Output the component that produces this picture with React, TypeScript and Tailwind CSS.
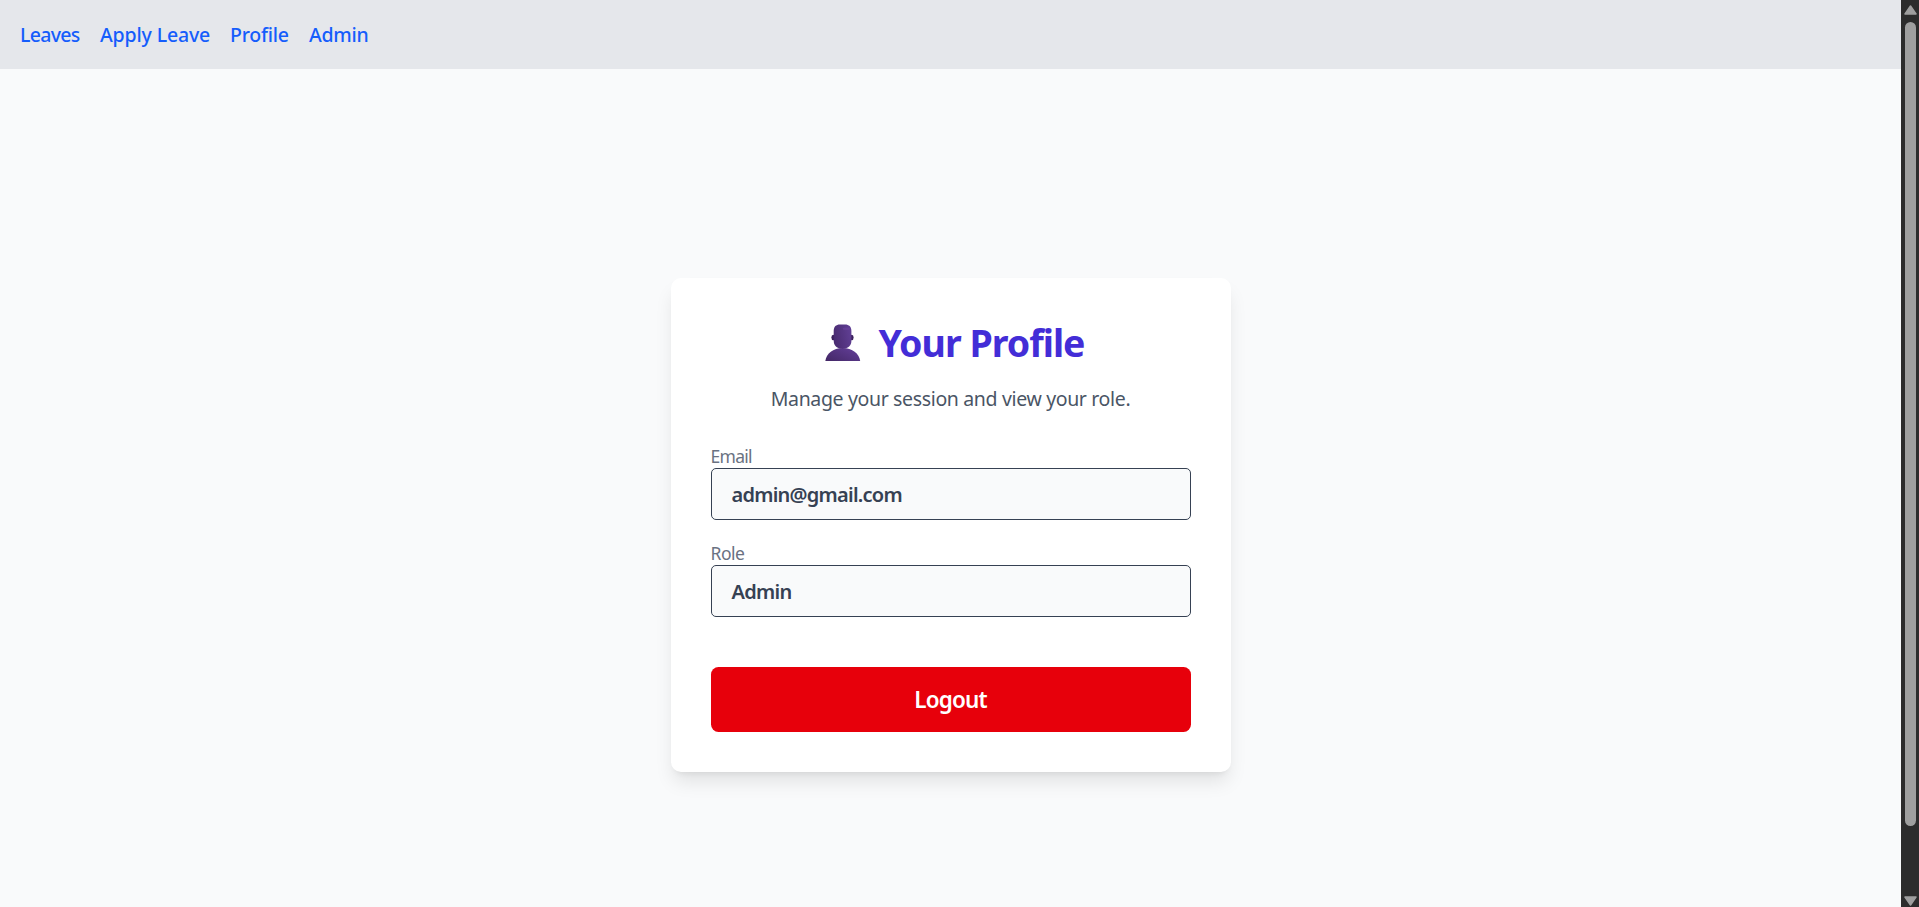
const links = [
  { label: "Leaves", style: "w-[60px] tracking-[-0.7px]" },
  { label: "Apply Leave", style: "w-[110px] tracking-[-0.15px]" },
  { label: "Profile", style: "w-[59px] tracking-[-0.25px]" },
  { label: "Admin", style: "w-[60px] tracking-[-0.3px]" },
];

function PersonIcon() {
  return (
    <svg width="36" height="38" viewBox="0 0 36 38" className="shrink-0" aria-hidden="true">
      <defs>
        <linearGradient id="head" x1="0" y1="0.6" x2="1" y2="0.3">
          <stop offset="0" stopColor="#492b70" />
          <stop offset="1" stopColor="#603f94" />
        </linearGradient>
        <linearGradient id="body" x1="0" y1="1" x2="0.9" y2="0.3">
          <stop offset="0" stopColor="#432765" />
          <stop offset="1" stopColor="#5e3b91" />
        </linearGradient>
      </defs>
      <ellipse cx="8.3" cy="13.5" rx="1.9" ry="2.7" fill="#3b205c" />
      <ellipse cx="26.7" cy="13.5" rx="1.9" ry="2.7" fill="#3b205c" />
      <path d="M.3 37C1.5 29.5 8 24 17.7 24S34 29.5 35.2 37Z" fill="url(#body)" />
      <path d="M8.7 7C8.700 2.500 11 .4 15 .4h5c4 0 6.400 2.100 6.400 6.600v9.500c0 4.500-2.400 8.100-8.900 8.100s-8.800-3.600-8.800-8.100Z" fill="url(#head)" />
      <ellipse cx="21.500" cy="4.700" rx="3.800" ry="1.300" fill="#6d43a0" opacity=".6" />
    </svg>
  );
}

function Field({ label, value, labelStyle, valueStyle }: { label: string; value: string; labelStyle: string; valueStyle: string }) {
  return (
    <div>
      <div className={`h-[25px] text-[17.5px] leading-[27px] text-[#6a7282] ${labelStyle}`}>{label}</div>
      <div className={`flex h-[52px] items-center rounded-[5px] border border-[#364153] bg-[#f9fafb] px-5 pt-[2px] text-[20px] font-semibold text-[#364153] ${valueStyle}`}>
        {value}
      </div>
    </div>
  );
}

export default function App() {
  return (
    <div className="flex h-[907px] w-full overflow-hidden bg-[#f9fafb] font-['Noto_Sans',sans-serif]">
      <div className="flex min-w-0 flex-1 flex-col">
        <nav className="flex h-[69px] shrink-0 items-center gap-5 bg-[#e5e7eb] px-5 pt-px text-[19.5px] font-medium text-[#155dfc]">
          {links.map((l) => (
            <a key={l.label} href="#" className={`whitespace-nowrap ${l.style}`}>{l.label}</a>
          ))}
        </nav>
        <main className="flex flex-1 items-start justify-center pt-[209px]">
          <section className="h-[494px] w-[560px] rounded-[10px] bg-white px-10 pt-[43px] shadow-[0_12.5px_18.75px_-3.75px_rgba(0,0,0,0.1),0_5px_7.5px_-5px_rgba(0,0,0,0.1)]">
            <div className="flex h-[43px] items-center justify-center gap-[18px] pl-[8px]">
              <PersonIcon />
              <h1 className="whitespace-nowrap text-[37.5px] leading-[41px] font-bold tracking-[-1px] text-[#432dd7]">Your Profile</h1>
            </div>
            <p className="mt-[20px] h-[30px] whitespace-nowrap text-center text-[19.5px] leading-[30px] tracking-[-0.35px] text-[#4a5565]">
              Manage your session and view your role.
            </p>
            <div className="mt-[29px] flex flex-col gap-5">
              <Field label="Email" value="admin@gmail.com" labelStyle="tracking-[-0.7px]" valueStyle="tracking-[-0.75px]" />
              <Field label="Role" value="Admin" labelStyle="tracking-[-0.5px]" valueStyle="tracking-[-0.7px]" />
            </div>
            <button className="mt-[50px] h-[65px] w-full rounded-[7.5px] bg-[#e7000b] pt-px text-[22.5px] font-semibold tracking-[-0.85px] text-white">Logout</button>
          </section>
        </main>
      </div>
      <div className="flex w-[18px] shrink-0 flex-col items-center bg-[#2c2c2c] pt-[5px]">
        <svg width="13" height="10" viewBox="0 0 13 10"><path d="M6.500 1 12 9H1Z" fill="#9f9f9f" stroke="#9f9f9f" strokeWidth="1.500" strokeLinejoin="round" /></svg>
        <div className="mt-[7px] h-[804px] w-[11px] rounded-full bg-[#9f9f9f]" />
        <svg className="mt-[70px]" width="13" height="10" viewBox="0 0 13 10"><path d="M1 1h11L6.500 9Z" fill="#9f9f9f" stroke="#9f9f9f" strokeWidth="1.500" strokeLinejoin="round" /></svg>
      </div>
    </div>
  );
}
